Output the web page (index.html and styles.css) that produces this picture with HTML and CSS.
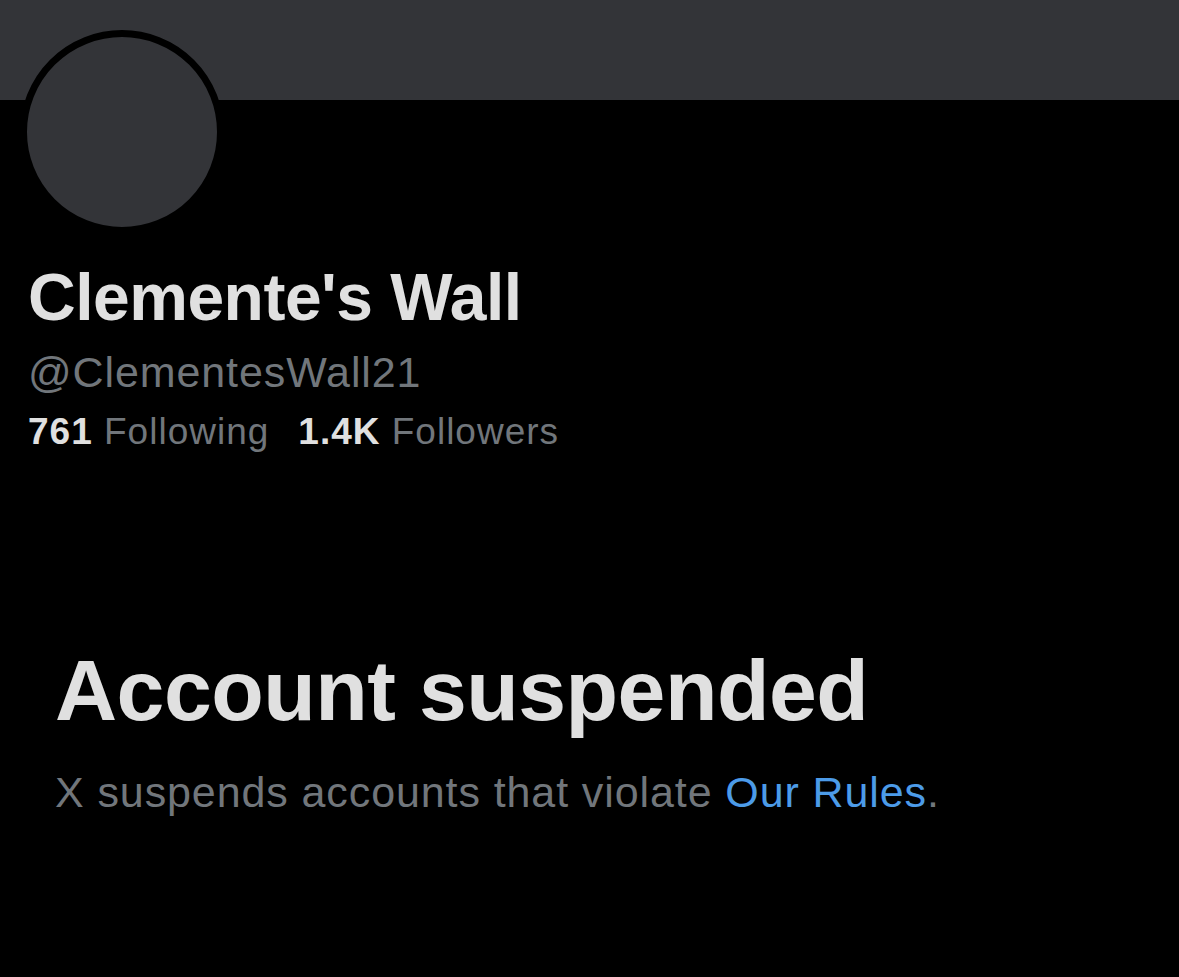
FILE: index.html
```html
<!DOCTYPE html>
<html lang="en">
<head>
<meta charset="utf-8">
<title>Clemente's Wall</title>
<link rel="stylesheet" href="styles.css">
</head>
<body>
<div class="banner"></div>
<div class="profile">
  <div class="avatar"></div>
  <h1 class="name">Clemente's Wall</h1>
  <div class="handle">@ClementesWall21</div>
  <div class="stats">
    <span class="stat"><b>761</b> Following</span>
    <span class="stat"><b>1.4K</b> Followers</span>
  </div>
</div>
<div class="notice">
  <h2 class="notice-title">Account suspended</h2>
  <p class="notice-text">X suspends accounts that violate <a href="#" class="link">Our Rules</a>.</p>
</div>
</body>
</html>
```

FILE: styles.css
```css
html, body {
  margin: 0;
  padding: 0;
  background: #000;
  height: 100%;
}
body {
  font-family: "Liberation Sans", Arial, sans-serif;
  color: #e0e0e0;
}
.banner {
  height: 100px;
  background: #333438;
}
.profile {
  padding-left: 28px;
}
.avatar {
  width: 190px;
  height: 190px;
  border-radius: 50%;
  background: #333438;
  border: 7px solid #000;
  margin-left: -8px;
  margin-top: -70px;
}
.name {
  margin: 26px 0 0;
  font-size: 66px;
  font-weight: 700;
  line-height: 74px;
  color: #e0e0e0;
  letter-spacing: -0.5px;
}
.handle {
  margin-top: 11px;
  font-size: 43px;
  line-height: 54px;
  color: #71767b;
  letter-spacing: 0.9px;
}
.stats {
  display: flex;
  gap: 29px;
  margin-top: 10px;
  font-size: 37px;
  line-height: 46px;
  color: #71767b;
  letter-spacing: 1px;
}
.stats b {
  color: #e0e0e0;
  font-weight: 700;
}
.notice {
  padding-left: 55px;
  margin-top: 185px;
}
.notice-title {
  margin: 0;
  font-size: 86px;
  font-weight: 700;
  line-height: 100px;
  color: #e0e0e0;
  letter-spacing: -0.5px;
}
.notice-text {
  margin: 24px 0 0;
  font-size: 43px;
  line-height: 56px;
  color: #71767b;
  letter-spacing: 0.9px;
}
.link {
  color: #4c9be8;
  text-decoration: none;
}
```
